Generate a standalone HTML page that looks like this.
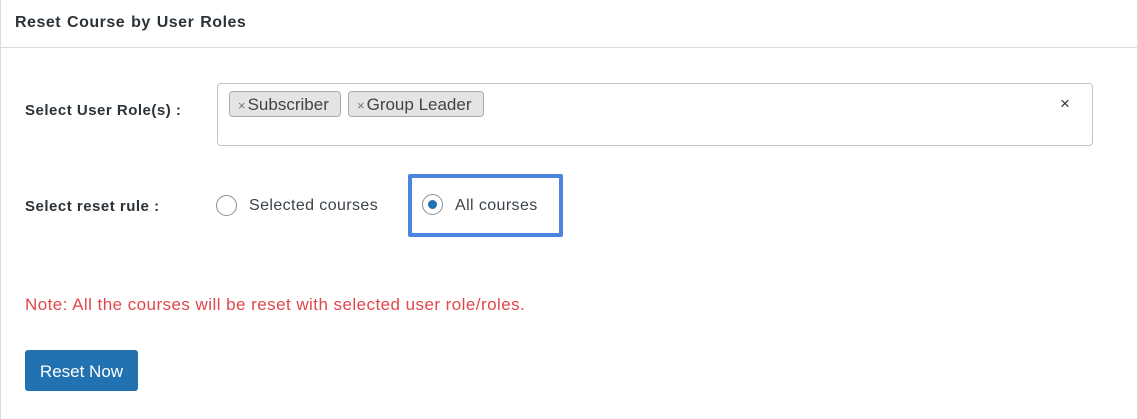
<!DOCTYPE html>
<html><head><style>
body{margin:0;width:1138px;height:419px;background:#fff;font-family:"Liberation Sans",sans-serif;position:relative;overflow:hidden;color:#1d2327}
.a{position:absolute}
</style></head><body>
<div class="a" style="left:0;top:0;width:1px;height:419px;background:#dcdcde"></div>
<div class="a" style="right:0;top:0;width:1px;height:419px;background:#dcdcde"></div>
<div class="a" style="left:0;top:47px;width:1138px;height:1px;background:#dcdcde"></div>
<div class="a" style="left:15px;top:14px;font-size:16px;font-weight:bold;color:#2c3338;letter-spacing:0.5px;word-spacing:1px">Reset Course by User Roles</div>
<div class="a" style="left:25px;top:102px;font-size:15px;font-weight:bold;color:#2c3338;letter-spacing:0.5px">Select User Role(s) :</div>
<div class="a" style="left:217px;top:83px;width:874px;height:61px;border:1px solid #c3c4c7;border-radius:4px"></div>
<div class="a" style="left:229px;top:91px;width:110px;height:24px;border:1px solid #aaa;border-radius:4px;background:#e4e4e4;font-size:17px;line-height:25px;color:#444;white-space:nowrap"><span style="font-size:13px;color:#777;margin:0 2px 0 8px">×</span>Subscriber</div>
<div class="a" style="left:348px;top:91px;width:134px;height:24px;border:1px solid #aaa;border-radius:4px;background:#e4e4e4;font-size:17px;line-height:25px;color:#444;white-space:nowrap"><span style="font-size:13px;color:#777;margin:0 2px 0 8px">×</span>Group Leader</div>
<div class="a" style="left:1060px;top:94px;font-size:17px;color:#333">×</div>
<div class="a" style="left:25px;top:198px;font-size:15px;font-weight:bold;color:#2c3338;letter-spacing:0.5px">Select reset rule :</div>
<div class="a" style="left:216px;top:195px;width:19px;height:19px;border:1px solid #8c8f94;border-radius:50%"></div>
<div class="a" style="left:249px;top:197px;font-size:16px;color:#3c434a;letter-spacing:0.4px">Selected courses</div>
<div class="a" style="left:408px;top:174px;width:147px;height:55px;border:4px solid #4a86e0;border-radius:2px"></div>
<div class="a" style="left:422px;top:194px;width:19px;height:19px;border:1px solid #8c8f94;border-radius:50%"></div>
<div class="a" style="left:428px;top:200px;width:9px;height:9px;background:#2271b1;border-radius:50%"></div>
<div class="a" style="left:455px;top:197px;font-size:16px;color:#3c434a;letter-spacing:0.4px">All courses</div>
<div class="a" style="left:25px;top:295px;font-size:17px;color:#e0474c;letter-spacing:0.45px">Note: All the courses will be reset with selected user role/roles.</div>
<div class="a" style="left:25px;top:350px;width:113px;height:41px;background:#2271b1;border-radius:3px;color:#fff;font-size:17px;line-height:43px;text-align:center">Reset Now</div>
</body></html>
